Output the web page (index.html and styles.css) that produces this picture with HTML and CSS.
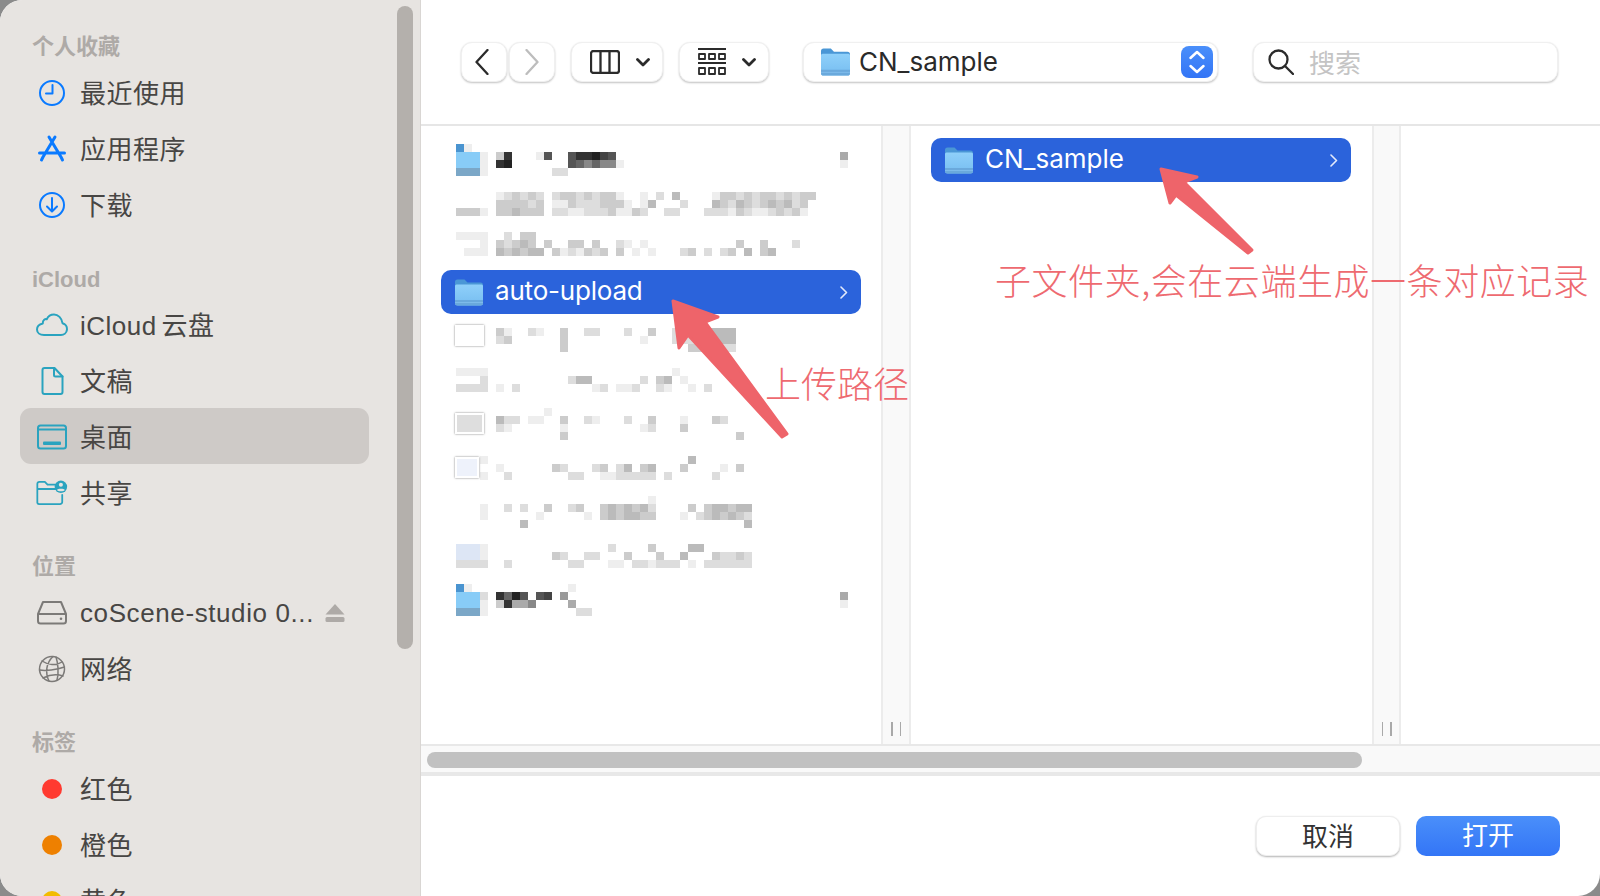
FILE: index.html
```html
<!DOCTYPE html>
<html lang="zh-CN">
<head>
    <meta charset="UTF-8">
    <title>打开</title>
    <link rel="stylesheet" href="styles.css">
</head>
<body>
    <svg class="defs" width="0" height="0">
        <defs>
            <linearGradient id="folderBody" x1="0" y1="0" x2="0" y2="1">
                <stop offset="0" stop-color="#8fd0fa"/>
                <stop offset="1" stop-color="#76bdf0"/>
            </linearGradient>
            <symbol id="folder" viewBox="0 0 28 27">
                <path d="M0 3a2.500 2.500 0 0 1 2.500-2.500h7l3 3h13a2.500 2.500 0 0 1 2.500 2.500v8H0z" fill="#4a97d6"/>
                <path d="M0 7a1.500 1.500 0 0 1 1.500-1.500h25A1.500 1.500 0 0 1 28 7v17a2.500 2.500 0 0 1-2.500 2.500h-23A2.500 2.500 0 0 1 0 24z" fill="url(#folderBody)"/>
                <path d="M0 21h28v3a2.500 2.500 0 0 1-2.500 2.500h-23A2.500 2.500 0 0 1 0 24z" fill="#6aa9dc"/>
                <path d="M0 23.500h28" stroke="#84c0ee" stroke-width=".8"/>
            </symbol>
        </defs>
    </svg>

    <div class="window">
        <aside class="sidebar">
            <div class="side-group">
                <div class="side-title">个人收藏</div>
                <div class="side-item">
                    <svg class="side-icon blue" viewBox="0 0 32 32"><circle cx="16" cy="16" r="12"/><path d="M16.500 8v8.500H10"/></svg>
                    <span>最近使用</span>
                </div>
                <div class="side-item">
                    <svg class="side-icon blue thick" viewBox="0 0 32 32"><path d="M13 4l12 20M19 4L7 24M3.500 20h25M5.500 27l1.500-3M26.500 27L25 24"/></svg>
                    <span>应用程序</span>
                </div>
                <div class="side-item">
                    <svg class="side-icon blue" viewBox="0 0 32 32"><circle cx="16" cy="16" r="12"/><path d="M16 9v13M11 17.500l5 5 5-5"/></svg>
                    <span>下载</span>
                </div>
            </div>
            <div class="side-group">
                <div class="side-title title-latin">iCloud</div>
                <div class="side-item">
                    <svg class="side-icon teal" viewBox="0 0 32 32"><path d="M8 26h17a6 6 0 0 0 1.500-11.800C25.800 9 22 5.500 18 5.500c-3.500 0-6 2-7.300 4.800C9.500 9.600 6.500 11 6.800 14.500 3.500 15.300 1 17.700 1 20.500 1 24 4 26 8 26z"/></svg>
                    <span class="tight">iCloud 云盘</span>
                </div>
                <div class="side-item">
                    <svg class="side-icon teal" viewBox="0 0 32 32"><path d="M8.500 3h10l8 8.500V27a2 2 0 0 1-2 2h-16a2 2 0 0 1-2-2V5a2 2 0 0 1 2-2z"/><path d="M18 3v7a1.500 1.500 0 0 0 1.500 1.500h7"/></svg>
                    <span>文稿</span>
                </div>
                <div class="side-item selected">
                    <svg class="side-icon teal" viewBox="0 0 32 32"><rect x="2" y="4.500" width="28" height="23" rx="2.500"/><path d="M2 8.500h28"/><rect class="solid" x="7" y="20.500" width="18" height="3.500" rx="1"/></svg>
                    <span>桌面</span>
                </div>
                <div class="side-item">
                    <svg class="side-icon teal" viewBox="0 0 36 32"><path d="M24 6.500h-11l-3-3H4a2.500 2.500 0 0 0-2.500 2.500v21A2.500 2.500 0 0 0 4 28.500h23a2.500 2.500 0 0 0 2.500-2.500v-8M2 11.500h20"/><circle class="solid" cx="28" cy="9" r="7"/><circle cx="28" cy="6.800" r="2.300" class="knock"/><path class="knock" d="M23.500 12.500c1-1.800 8-1.800 9 0-1 2-8 2-9 0z"/></svg>
                    <span>共享</span>
                </div>
            </div>
            <div class="side-group">
                <div class="side-title">位置</div>
                <div class="side-item">
                    <svg class="side-icon grey" viewBox="0 0 32 32"><path d="M7 5h18l5 12v7a2.500 2.500 0 0 1-2.500 2.500h-23A2.500 2.500 0 0 1 2 24v-7zM2 17h28"/><circle class="solid" cx="25" cy="21.800" r="1.300"/></svg>
                    <span class="ellipsis">coScene-studio 0...</span>
                    <svg class="eject" viewBox="0 0 20 18"><path d="M10 0l9.500 10.500H.5z"/><rect x="0.500" y="13" width="19" height="5" rx="1.500"/></svg>
                </div>
                <div class="side-item">
                    <svg class="side-icon grey globe" viewBox="0 0 32 32"><circle cx="16" cy="16" r="12.500"/><path d="M6 8c6 4 14 5 20 1M3.500 17c6 1 17 0 25-3M17 3.500C10 10 9 20 13 28M20 4c2 6 3 16 1 23M7 25c6-3 14-4 20-2"/></svg>
                    <span>网络</span>
                </div>
            </div>
            <div class="side-group">
                <div class="side-title">标签</div>
                <div class="side-item"><span class="tag tag-red"></span><span>红色</span></div>
                <div class="side-item"><span class="tag tag-orange"></span><span>橙色</span></div>
                <div class="side-item"><span class="tag tag-yellow"></span><span>黄色</span></div>
            </div>
            <div class="side-scroll"></div>
        </aside>

        <main class="main">
            <div class="toolbar">
                <div class="nav-pair">
                    <button class="tool-btn nav-btn"><svg class="tool-icon back" width="14" height="26" viewBox="0 0 14 26"><path d="M12.500 1L1.500 13l11 12"/></svg></button>
                    <button class="tool-btn nav-btn"><svg class="tool-icon off" width="14" height="26" viewBox="0 0 14 26"><path d="M1.500 1l11 12-11 12"/></svg></button>
                </div>
                <button class="tool-btn view-btn">
                    <svg class="tool-icon" width="30" height="24" viewBox="0 0 30 24"><rect x="1" y="1" width="28" height="22" rx="2.500"/><path d="M10.500 1v22M19.500 1v22"/></svg>
                    <svg class="chev" width="14" height="9" viewBox="0 0 14 9"><path d="M1.500 1.500L7 7l5.500-5.500"/></svg>
                </button>
                <button class="tool-btn group-btn">
                    <svg class="tool-icon thin" width="28" height="28" viewBox="0 0 28 28"><path d="M0 1h28M0 15h28"/><path d="M1 6h6v5H1zM11 6h6v5h-6zM21 6h6v5h-6zM1 20h6v6H1zM11 20h6v6h-6zM21 20h6v6h-6z"/></svg>
                    <svg class="chev" width="14" height="9" viewBox="0 0 14 9"><path d="M1.500 1.500L7 7l5.500-5.500"/></svg>
                </button>
                <div class="tool-btn path-popup">
                    <svg class="folder-big"><use href="#folder"/></svg>
                    <span class="path-name">CN_sample</span>
                    <span class="stepper">
                        <svg width="20" height="26" viewBox="0 0 20 26"><path d="M3.500 9L10 3l6.500 6M3.500 17l6.500 6 6.500-6"/></svg>
                    </span>
                </div>
                <div class="tool-btn search-box">
                    <svg class="tool-icon" width="26" height="26" viewBox="0 0 26 26"><circle cx="10.500" cy="10.500" r="9"/><path d="M17 17l8 8"/></svg>
                    <span>搜索</span>
                </div>
            </div>

            <div class="columns">
                <section class="column column-first">
                    <div class="mosaic" id="mosaicTop"></div>
                    <div class="file-row">
                        <svg class="folder-small"><use href="#folder"/></svg>
                        <span>auto-upload</span>
                        <svg class="row-chev" width="8" height="13" viewBox="0 0 8 13"><path d="M1 1l5.500 5.500L1 12"/></svg>
                    </div>
                    <div class="mosaic" id="mosaicBottom">
                        <div class="thumb thumb-a"></div>
                        <div class="thumb thumb-b"></div>
                        <div class="thumb thumb-c"></div>
                    </div>
                </section>
                <div class="resizer"><i></i><i></i></div>
                <section class="column column-second">
                    <div class="file-row">
                        <svg class="folder-small"><use href="#folder"/></svg>
                        <span>CN_sample</span>
                        <svg class="row-chev" width="8" height="13" viewBox="0 0 8 13"><path d="M1 1l5.500 5.500L1 12"/></svg>
                    </div>
                </section>
                <div class="resizer resizer-last"><i></i><i></i></div>
                <section class="column column-last"></section>
            </div>

            <div class="hscroll"><div class="hscroll-thumb"></div></div>

            <div class="footer">
                <button class="action-btn">取消</button>
                <button class="action-btn primary">打开</button>
            </div>
        </main>

        <svg class="arrows" width="1600" height="896" viewBox="0 0 1600 896">
            <path d="M673 301L718 317 705 322 787 434 782 437 688 335 679 348z"/>
            <path d="M1161 169L1197 177 1184 182 1252 250 1248 253 1176 195 1170 203z"/>
        </svg>
        <div class="note note-path">上传路径</div>
        <div class="note note-sub">子文件夹,会在云端生成一条对应记录</div>
    </div>

    <script src="mosaic.js"></script>
</body>
</html>
```

FILE: styles.css
```css
* {
    box-sizing: border-box;
}
body {
    margin: 0;
    height: 896px;
    overflow: hidden;
    background-color: #8b8b8b;
    font-family: "Inter", "Noto Sans CJK SC", sans-serif;
    color: #2a2a2a;
}
.defs {
    position: absolute;
}
.window {
    position: relative;
    display: flex;
    width: 1600px;
    height: 896px;
    overflow: hidden;
    border-radius: 22px 0 22px 22px;
    background: white;
}

/* sidebar */
.sidebar {
    position: relative;
    flex: none;
    width: 421px;
    padding-top: 27px;
    overflow: hidden;
    background-color: #e7e4e1;
    border-right: 1px solid #d9d6d3;
}
.side-group {
    margin-bottom: 26px;
}
.side-title {
    height: 38px;
    padding: 1px 0 0 32px;
    font-family: "Liberation Sans", "Noto Sans CJK SC", sans-serif;
    font-size: 22px;
    font-weight: 700;
    line-height: 38px;
    color: #aeaaa7;
}
.side-title.title-latin {
    padding-top: 2px;
}
.side-item {
    display: flex;
    align-items: center;
    height: 56px;
    padding-left: 32px;
    font-family: "Liberation Sans", "Noto Sans CJK SC", sans-serif;
    font-size: 26px;
    color: #484644;
}
.side-item span {
    padding-bottom: 4px;
    letter-spacing: 0.5px;
}
.side-item .tight {
    word-spacing: -3px;
}
.side-item .ellipsis {
    padding-bottom: 0;
    letter-spacing: 0.6px;
}
.side-item.selected {
    height: 56px;
    margin: -1px 51px 1px 20px;
    padding: 2px 0 0 12px;
    border-radius: 11px;
    background-color: #cecac7;
}
.side-icon {
    flex: none;
    width: 32px;
    height: 32px;
    margin-left: 4px;
    margin-right: 12px;
    fill: none;
    stroke-width: 2;
    stroke-linecap: round;
    stroke-linejoin: round;
}
.side-icon.blue { stroke: #0a7aff; }
.side-icon.teal { stroke: #2aa3bf; color: #2aa3bf; }
.side-icon.grey { stroke: #7c7a78; color: #7c7a78; }
.side-icon.thick { stroke-width: 3; }
.side-icon.globe { stroke-width: 1.500; }
.side-icon .solid { fill: currentColor; stroke: none; }
.side-icon .knock { fill: #e7e4e1; stroke: none; }
.eject {
    width: 20px;
    height: 18px;
    margin-left: 11px;
    fill: #aeaaa7;
}
.side-item .tag {
    flex: none;
    width: 20px;
    height: 20px;
    margin-left: 10px;
    margin-right: 18px;
    padding: 0;
    border-radius: 50%;
}
.tag-red { background-color: #ff3a30; }
.tag-orange { background-color: #ee8000; }
.tag-yellow { background-color: #f2bc00; }
.side-scroll {
    position: absolute;
    top: 6px;
    left: 397px;
    width: 16px;
    height: 643px;
    border-radius: 8px;
    background-color: #b4b0ac;
}

/* toolbar */
.main {
    flex: 1;
    display: flex;
    flex-direction: column;
    min-width: 0;
}
.toolbar {
    display: flex;
    flex: none;
    align-items: flex-start;
    height: 126px;
    padding: 42px 0 0 40px;
    border-bottom: 2px solid #e6e6e6;
}
.tool-btn {
    display: flex;
    align-items: center;
    height: 40px;
    padding: 0;
    border: 1px solid #f0f0f0;
    border-radius: 11px;
    background: white;
    box-shadow: 0 1px 2px rgba(0, 0, 0, 0.24);
}
.nav-pair {
    display: flex;
    gap: 2px;
    margin-right: 16px;
}
.nav-btn {
    justify-content: center;
    width: 46px;
}
.tool-icon.back {
    margin-right: 4px;
}
.view-btn {
    width: 92px;
    margin-right: 16px;
    padding-left: 18px;
}
.group-btn {
    width: 90px;
    padding-left: 18px;
    margin-right: 34px;
}
.tool-icon {
    fill: none;
    stroke: #2b2b2b;
    stroke-width: 2.300;
    stroke-linecap: round;
    stroke-linejoin: round;
}
.tool-icon.off {
    stroke: #bdbdbd;
}
.tool-icon.thin {
    stroke-width: 1.800;
    stroke-linecap: butt;
}
.chev {
    margin-left: 16px;
    fill: none;
    stroke: #2b2b2b;
    stroke-width: 2.800;
    stroke-linecap: round;
    stroke-linejoin: round;
}
.path-popup {
    width: 415px;
    padding-left: 17px;
    margin-right: 35px;
    font-size: 26px;
}
.folder-big {
    flex: none;
    width: 29px;
    height: 28px;
    margin-right: 9px;
}
.path-name {
    flex: 1;
    padding-bottom: 2px;
    color: #2a2a2a;
}
.stepper {
    display: flex;
    align-items: center;
    justify-content: center;
    width: 32px;
    height: 32px;
    margin-right: 4px;
    border-radius: 8px;
    background: linear-gradient(#4a8ffa, #3375f6);
}
.stepper path {
    fill: none;
    stroke: white;
    stroke-width: 2.500;
    stroke-linecap: round;
    stroke-linejoin: round;
}
.search-box {
    width: 305px;
    padding-left: 14px;
    font-size: 26px;
    color: #c4c4c4;
}
.search-box span {
    margin-left: 15px;
    padding-bottom: 2px;
}

/* columns */
.columns {
    display: flex;
    flex: none;
    height: 620px;
    border-bottom: 2px solid #e8e8e8;
}
.column {
    flex: none;
}
.column-first {
    width: 460px;
    padding: 18px 20px 0;
}
.column-first .file-row span {
    letter-spacing: -0.2px;
}
.column-second {
    width: 461px;
    padding: 12px 21px 0 20px;
}
.column-last {
    flex: 1;
}
.resizer {
    display: flex;
    flex: none;
    align-items: flex-end;
    justify-content: center;
    gap: 7px;
    width: 30px;
    padding-bottom: 8px;
    background-color: #f9f9f9;
    border-left: 2px solid #ececec;
    border-right: 2px solid #ececec;
}
.resizer-last {
    width: 29px;
}
.resizer i {
    width: 1.500px;
    height: 14px;
    background-color: #a9a9a9;
}
.file-row {
    display: flex;
    align-items: center;
    height: 44px;
    padding: 0 13px 0 14px;
    border-radius: 10px;
    background-color: #2b63db;
    font-size: 26px;
    color: white;
}
.file-row span {
    flex: 1;
    padding-bottom: 3px;
}
.folder-small {
    flex: none;
    width: 28px;
    height: 27px;
    margin-right: 12px;
}
.row-chev {
    fill: none;
    stroke: #e3eafa;
    stroke-width: 1.600;
    stroke-linecap: round;
    stroke-linejoin: round;
}
.mosaic {
    position: relative;
    display: grid;
    grid-template-columns: repeat(50, 8px);
    grid-auto-rows: 8px;
    width: 400px;
    margin-left: 15px;
}
#mosaicTop {
    height: 120px;
    margin-bottom: 6px;
}
#mosaicBottom {
    margin-top: 6px;
}
.thumb {
    position: absolute;
    left: -1px;
    width: 29px;
    height: 21px;
    border: 2px solid white;
    box-shadow: 0 0 2px rgba(0, 0, 0, 0.5);
    background-color: white;
}
.thumb-a { top: 5px; }
.thumb-b { top: 93px; background-color: #dedede; }
.thumb-c { top: 137px; width: 24px; background-color: #eef2fb; }

/* bottom */
.hscroll {
    flex: none;
    height: 30px;
    padding: 6px 0 0 6px;
    background-color: #f9f9f9;
    border-bottom: 4px solid #e8e8e8;
}
.hscroll-thumb {
    width: 935px;
    height: 16px;
    border-radius: 8px;
    background-color: #c1c1c1;
}
.footer {
    display: flex;
    flex: 1;
    justify-content: flex-end;
    gap: 16px;
    padding: 40px 40px 0 0;
}
.action-btn {
    width: 144px;
    height: 40px;
    padding: 0 0 4px;
    border: 1px solid #eee;
    border-radius: 10px;
    background: white;
    box-shadow: 0 1px 2px rgba(0, 0, 0, 0.3);
    font-family: "Noto Sans CJK SC", sans-serif;
    font-size: 26px;
    line-height: 36px;
    color: #333;
}
.action-btn.primary {
    border: none;
    background: linear-gradient(#4a8ffa, #3375f6);
    box-shadow: none;
    color: white;
}

/* annotations on top of the dialog */
.arrows {
    position: absolute;
    top: 0;
    left: 0;
    fill: #ee646a;
    stroke: #ee646a;
    stroke-width: 3;
    stroke-linejoin: round;
    pointer-events: none;
}
.note {
    position: absolute;
    font-family: "Noto Sans CJK SC", sans-serif;
    font-size: 36px;
    font-weight: 300;
    line-height: 44px;
    white-space: nowrap;
    color: #ee6a70;
}
.note-path {
    top: 360px;
    left: 765px;
}
.note-sub {
    top: 257px;
    left: 995px;
    letter-spacing: 0.55px;
}
```

FILE: mosaic.js
```js
// blurred file names, one string per 8px row, one char per 8px cell
// . = empty, 0-f = grey level, B/L/S/P = folder or picture blues
const topRows = [
    "Bef",
    "LLLe.c3.f.e5..533245............................a",
    "LLLe.32.......568688e...........................e",
    "SSSe........dd",
    "",
    "",
    "...f.edcdcd.dccdcdcce..e.d.b..f.eccdcdccdcdcc",
    "ffff.ccccdc.eecdddccce.eb...d...bcdbcdcbcbdc",
    "ccce.ccbccc.ddeedddceecd..dd...dddecdeedcdce",
    "",
    "",
    "eeee..d.cc...",
    "fffe.cdcbc.c..cc.c..de.e.f.f.......c..c...d",
    "feee.bcbcbb.cedecdc.c.e.e.f.dc.d.dc.b.cb.f",
    ""
];

const bottomRows = [
    "...........f",
    ".....ce..de..c..dd...d..c..ddddbbbb",
    ".....dc......c.........e...ddddbbbb",
    ".............c...............ccdddd",
    "",
    "",
    "eeee.......................e.....f",
    "fffd........f.dbb......d.cb.e",
    "dddd.e.d.........ed.eed..de..e.d",
    "",
    "",
    "...........e",
    ".....bdd.ee..c..de...d..c...e...cd",
    ".....de......e.........ed...c",
    ".............c.....................c",
    "",
    "",
    "...e.........................b",
    ".....e......cd...dc.db.cb...c....e.c",
    "...e.fd.......dd..eeddddd.d.....d",
    "",
    "",
    "ffff....................e",
    "...e.fd.d..c..dc..cbcbcbd....c.cbbcbb",
    "...e......e.....e.cbcbbcc...e.dcbcbcd",
    "........b...........................b",
    "",
    "",
    "PPPe.f.............d....c....bb",
    "PPPe........cd..dd...c...c..b...cddcd",
    "dddd..d.......dd...ee.ddeddd.e.dddddd",
    "",
    "",
    "Bef...........e",
    "LLLd.3625.54.9..................................a",
    "LLLe.c3aa8....a.................................e",
    "SSSe...........dd"
];

const blues = { B: "#4a94d0", L: "#88ccf7", S: "#7ba7c7", P: "#dde6f5" };

function fill(box, rows) {
    rows.forEach(function (row, y) {
        row.split("").forEach(function (ch, x) {
            if (ch === ".") return;
            const cell = document.createElement("div");
            cell.style.gridRow = y + 1;
            cell.style.gridColumn = x + 1;
            cell.style.background = blues[ch] || "#" + ch + ch + ch;
            box.appendChild(cell);
        });
    });
}

fill(document.getElementById("mosaicTop"), topRows);
fill(document.getElementById("mosaicBottom"), bottomRows);
```
